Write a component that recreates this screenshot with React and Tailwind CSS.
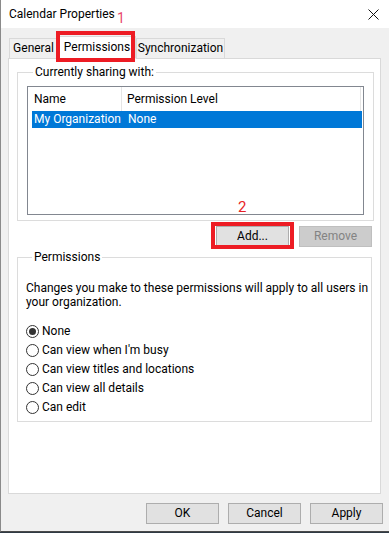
import { useState } from "react";

const options = [
  "None",
  "Can view when I'm busy",
  "Can view titles and locations",
  "Can view all details",
  "Can edit",
];

function Radio({ label, checked, onSelect }) {
  return (
    <button onClick={onSelect} className="flex items-center h-[19px] text-left">
      <span className="w-[13px] h-[13px] rounded-full border border-[#333333] bg-white flex items-center justify-center">
        {checked && <span className="w-[7px] h-[7px] rounded-full bg-[#333333]" />}
      </span>
      <span className="ml-[3px] text-[#000000]">{label}</span>
    </button>
  );
}

function WinButton({ children, disabled, className = "" }) {
  return (
    <button
      disabled={disabled}
      className={`w-[73px] h-[21px] border flex items-center justify-center ${
        disabled
          ? "bg-[#cccccc] border-[#bfbfbf] text-[#838383]"
          : "bg-[#e1e1e1] border-[#adadad] text-[#000000]"
      } ${className}`}
    >
      {children}
    </button>
  );
}

export default function App() {
  const [level, setLevel] = useState("None");
  const [tab, setTab] = useState("Permissions");

  return (
    <div
      className="relative w-[389px] h-[533px] bg-[#2f3a44] text-[12px] leading-[15px] text-black overflow-hidden"
      style={{ fontFamily: "Roboto, 'Noto Sans', sans-serif" }}
    >
      <div className="w-[389px] h-[532px] flex flex-col border-l border-b border-l-[#8a8a8a] border-b-[#4a4a4a] bg-[#f0f0f0]">
        {/* Title bar */}
        <div className="h-[28px] bg-white flex items-center pl-[8px] pr-[10px] shrink-0">
          <span>Calendar Properties</span>
          <svg className="ml-auto" width="11" height="11" viewBox="0 0 11 11">
            <path d="M0.5 0.5 L10.5 10.5 M10.5 0.5 L0.5 10.5" stroke="#111" strokeWidth="1" />
          </svg>
        </div>

        {/* Tabs */}
        <div className="h-[30px] flex items-end pl-[8px] shrink-0">
          {["General", "Permissions", "Synchronization"].map((t) => {
            const on = tab === t;
            const width = t === "General" ? "w-[49px]" : t === "Permissions" ? "w-[78px]" : "w-[89px]";
            return (
              <button
                key={t}
                onClick={() => setTab(t)}
                className={`${width} flex items-center justify-center border border-[#d9d9d9] ${
                  on
                    ? "h-[23px] bg-white border-b-white -mb-[1px] relative z-10"
                    : "h-[20px] bg-[#f0f0f0] border-b-0"
                }`}
              >
                {t}
              </button>
            );
          })}
        </div>

        {/* Tab page */}
        <div className="ml-[7px] w-[373px] h-[436px] bg-white border border-[#d9d9d9] px-[8px] pt-[6px] shrink-0">
          <fieldset className="border border-[#dcdcdc] px-[9px] pb-[5px]">
            <legend className="ml-[6px] px-[2px]">Currently sharing with:</legend>
            <div className="mt-[6px] w-[337px] h-[129px] border border-[#828790] bg-white">
              <div className="flex h-[24px] items-center">
                <div className="w-[94px] pl-[6px] h-full flex items-center border-r border-[#e5e5e5]">Name</div>
                <div className="w-[239px] pl-[5px] h-full flex items-center border-r border-[#e5e5e5]">
                  Permission Level
                </div>
              </div>
              <div className="ml-[4px] mr-[1px] h-[17px] bg-[#0078d7] text-white flex items-center">
                <div className="w-[90px] pl-[2px] whitespace-nowrap overflow-hidden">My Organization</div>
                <div className="pl-[6px]">None</div>
              </div>
            </div>
          </fieldset>

          <div className="mt-[5px] h-[21px] flex justify-end gap-[10px]">
            <WinButton>Add...</WinButton>
            <WinButton disabled>Remove</WinButton>
          </div>

          <fieldset className="mt-[3px] border border-[#dcdcdc] pl-[8px] pr-[2px] pb-[4px]">
            <legend className="ml-[6px] px-[2px]">Permissions</legend>
            <p className="mt-[16px] leading-[14px]">
              Changes you make to these permissions will apply to all users in your organization.
            </p>
            <div className="mt-[13px] flex flex-col">
              {options.map((o) => (
                <Radio key={o} label={o} checked={level === o} onSelect={() => setLevel(o)} />
              ))}
            </div>
          </fieldset>
        </div>

        {/* Dialog buttons */}
        <div className="mt-[9px] flex justify-end gap-[9px] pr-[6px]">
          <WinButton>OK</WinButton>
          <WinButton>Cancel</WinButton>
          <WinButton>Apply</WinButton>
        </div>
      </div>

      {/* Annotations */}
      <span className="absolute left-[117px] top-[10px] text-[14px] leading-[16px] text-[#e8486e]">1</span>
      <div className="absolute left-[56px] top-[31px] w-[79px] h-[31px] border-[4px] border-[#ed1c24] z-20" />
      <span className="absolute left-[238px] top-[199px] text-[15px] leading-[17px] text-[#e81e25]">2</span>
      <div className="absolute left-[211px] top-[222px] w-[83px] h-[27px] border-[4px] border-[#ed1c24] z-20" />
    </div>
  );
}
